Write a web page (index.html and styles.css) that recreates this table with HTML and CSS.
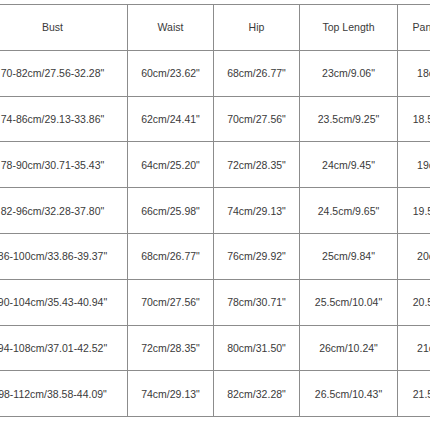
FILE: index.html
```html
<!DOCTYPE html>
<html>
<head>
<meta charset="utf-8">
<link rel="stylesheet" href="styles.css">
</head>
<body>
<div class="frame">
<table class="chart">
<colgroup>
<col class="c-bust"><col class="c-waist"><col class="c-hip"><col class="c-top"><col class="c-pants">
</colgroup>
<tr><td>Bust</td><td>Waist</td><td>Hip</td><td>Top Length</td><td>Pants Length</td></tr>
<tr><td>70-82cm/27.56-32.28"</td><td>60cm/23.62"</td><td>68cm/26.77"</td><td>23cm/9.06"</td><td>18cm/7.09"</td></tr>
<tr><td>74-86cm/29.13-33.86"</td><td>62cm/24.41"</td><td>70cm/27.56"</td><td>23.5cm/9.25"</td><td>18.5cm/7.28"</td></tr>
<tr><td>78-90cm/30.71-35.43"</td><td>64cm/25.20"</td><td>72cm/28.35"</td><td>24cm/9.45"</td><td>19cm/7.48"</td></tr>
<tr><td>82-96cm/32.28-37.80"</td><td>66cm/25.98"</td><td>74cm/29.13"</td><td>24.5cm/9.65"</td><td>19.5cm/7.68"</td></tr>
<tr><td>86-100cm/33.86-39.37"</td><td>68cm/26.77"</td><td>76cm/29.92"</td><td>25cm/9.84"</td><td>20cm/7.87"</td></tr>
<tr><td>90-104cm/35.43-40.94"</td><td>70cm/27.56"</td><td>78cm/30.71"</td><td>25.5cm/10.04"</td><td>20.5cm/8.07"</td></tr>
<tr><td>94-108cm/37.01-42.52"</td><td>72cm/28.35"</td><td>80cm/31.50"</td><td>26cm/10.24"</td><td>21cm/8.27"</td></tr>
<tr><td>98-112cm/38.58-44.09"</td><td>74cm/29.13"</td><td>82cm/32.28"</td><td>26.5cm/10.43"</td><td>21.5cm/8.46"</td></tr>
</table>
</div>
</body>
</html>
```
FILE: styles.css
```css
html, body {
  margin: 0;
  padding: 0;
  background: #ffffff;
}
.frame {
  width: 430px;
  height: 430px;
  overflow: hidden;
  padding-top: 4px;
  box-sizing: border-box;
}
.chart {
  margin-left: -23px;
  border-collapse: collapse;
  table-layout: fixed;
  width: 512px;
  font-family: "Liberation Sans", Arial, sans-serif;
  font-size: 10.5px;
  color: #3a3a3a;
}
.c-bust { width: 150px; }
.c-waist { width: 86px; }
.c-hip { width: 86px; }
.c-top { width: 98px; }
.c-pants { width: 92px; }
.chart td {
  border: 1px solid #8c8c8c;
  height: 44.8px;
  padding: 0;
  text-align: center;
  vertical-align: middle;
  white-space: nowrap;
  overflow: hidden;
}
```
